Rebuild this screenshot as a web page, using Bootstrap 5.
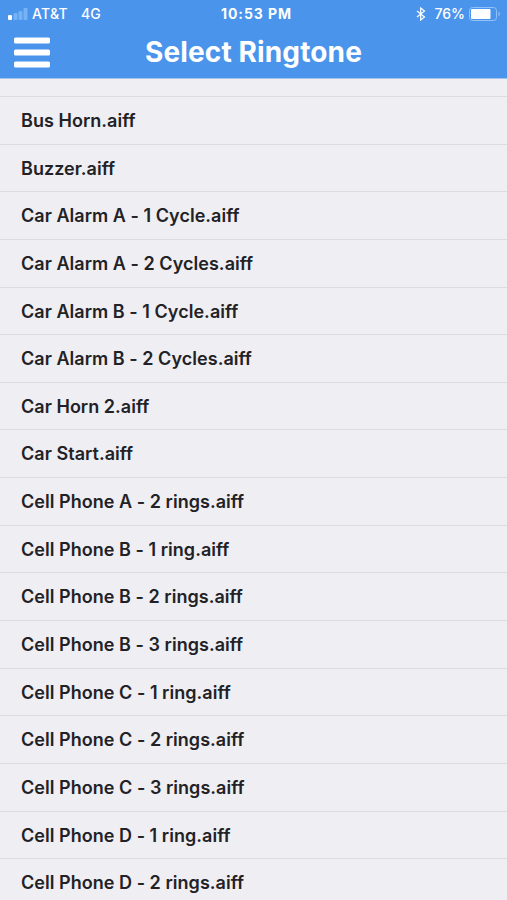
<!DOCTYPE html>
<html lang="en">
<head>
<meta charset="utf-8">
<meta name="viewport" content="width=device-width, initial-scale=1">
<title>Select Ringtone</title>
<link href="https://cdn.jsdelivr.net/npm/bootstrap@5.3.0/dist/css/bootstrap.min.css" rel="stylesheet">
<style>
body{font-family:Inter,"Liberation Sans",sans-serif;background:#efeef3;color:#222226;height:900px;overflow:hidden}
.app-top{background:#4a94ec;height:79px;color:#fff;border-bottom:1px solid #a5c3ea}
.status{height:27px;font-size:14px;font-weight:500;line-height:27px;padding:0 6px 0 8px}
.status>.status-side{flex:1 1 0}
.carrier{margin-left:4px;letter-spacing:.25px}
.net{margin-left:13px;letter-spacing:.25px}
.clock{font-weight:700;font-size:14px;letter-spacing:.92px;padding-left:4px}
.title-row{height:50px;padding:0 14px}
.title-row h1{font-size:28px;font-weight:700;line-height:50px;letter-spacing:.13px}
.side{width:36px}
.tones{padding-top:17px}
.tones .list-group-item{height:47.65px;padding:0 21px;background:transparent;border-color:#dcdbe0;border-width:1px 0 0;font-size:18px;font-weight:600;line-height:47.4px;letter-spacing:.035px;color:#222226;white-space:nowrap}
</style>
</head>
<body>
<header class="app-top">
<div class="status d-flex align-items-center">
<div class="status-side d-flex align-items-center"><svg width="20" height="12" viewBox="0 0 20 12" fill="#fff"><rect y="7" width="4" height="5" rx="1"/><g fill="#75b3f5"><rect x="5.500" y="5" width="4" height="7" rx="1"/><rect x="10.500" y="3" width="4" height="9" rx="1"/><rect x="15.500" width="4" height="12" rx="1"/></g></svg><span class="carrier">AT&amp;T</span><span class="net">4G</span></div>
<div class="clock text-center">10:53 PM</div>
<div class="status-side d-flex align-items-center justify-content-end"><svg width="10" height="14" viewBox="0 0 10 14" fill="none" stroke="#fff" stroke-width="1.200"><path d="M1 4l7.500 6-3.800 3V1l3.800 3L1 10"/></svg><span class="ms-2">76%</span><svg class="ms-1" width="32" height="14" viewBox="0 0 32 14"><rect x=".5" y=".5" width="27" height="13" rx="3" fill="none" stroke="#8fc3fa"/><rect x="2" y="2" width="19.500" height="10" rx="1" fill="#fff"/><path d="M29.500 4.500q3 2.500 0 5z" fill="#8fc3fa"/></svg></div>
</div>
<div class="title-row d-flex align-items-center justify-content-between">
<svg class="side" width="36" height="31" viewBox="0 0 36 31" fill="#fff"><rect y=".5" width="36" height="6" rx="1.500"/><rect y="12.500" width="36" height="6" rx="1.500"/><rect y="24.500" width="36" height="6" rx="1.500"/></svg>
<h1 class="m-0">Select Ringtone</h1><span class="side"></span>
</div>
</header>
<main class="tones"><ul class="list-group list-group-flush">
<li class="list-group-item">Bus Horn.aiff</li>
<li class="list-group-item">Buzzer.aiff</li>
<li class="list-group-item">Car Alarm A - 1 Cycle.aiff</li>
<li class="list-group-item">Car Alarm A - 2 Cycles.aiff</li>
<li class="list-group-item">Car Alarm B - 1 Cycle.aiff</li>
<li class="list-group-item">Car Alarm B - 2 Cycles.aiff</li>
<li class="list-group-item">Car Horn 2.aiff</li>
<li class="list-group-item">Car Start.aiff</li>
<li class="list-group-item">Cell Phone A - 2 rings.aiff</li>
<li class="list-group-item">Cell Phone B - 1 ring.aiff</li>
<li class="list-group-item">Cell Phone B - 2 rings.aiff</li>
<li class="list-group-item">Cell Phone B - 3 rings.aiff</li>
<li class="list-group-item">Cell Phone C - 1 ring.aiff</li>
<li class="list-group-item">Cell Phone C - 2 rings.aiff</li>
<li class="list-group-item">Cell Phone C - 3 rings.aiff</li>
<li class="list-group-item">Cell Phone D - 1 ring.aiff</li>
<li class="list-group-item">Cell Phone D - 2 rings.aiff</li>
</ul></main>
<script src="https://cdn.jsdelivr.net/npm/bootstrap@5.3.0/dist/js/bootstrap.bundle.min.js"></script>
</body>
</html>
